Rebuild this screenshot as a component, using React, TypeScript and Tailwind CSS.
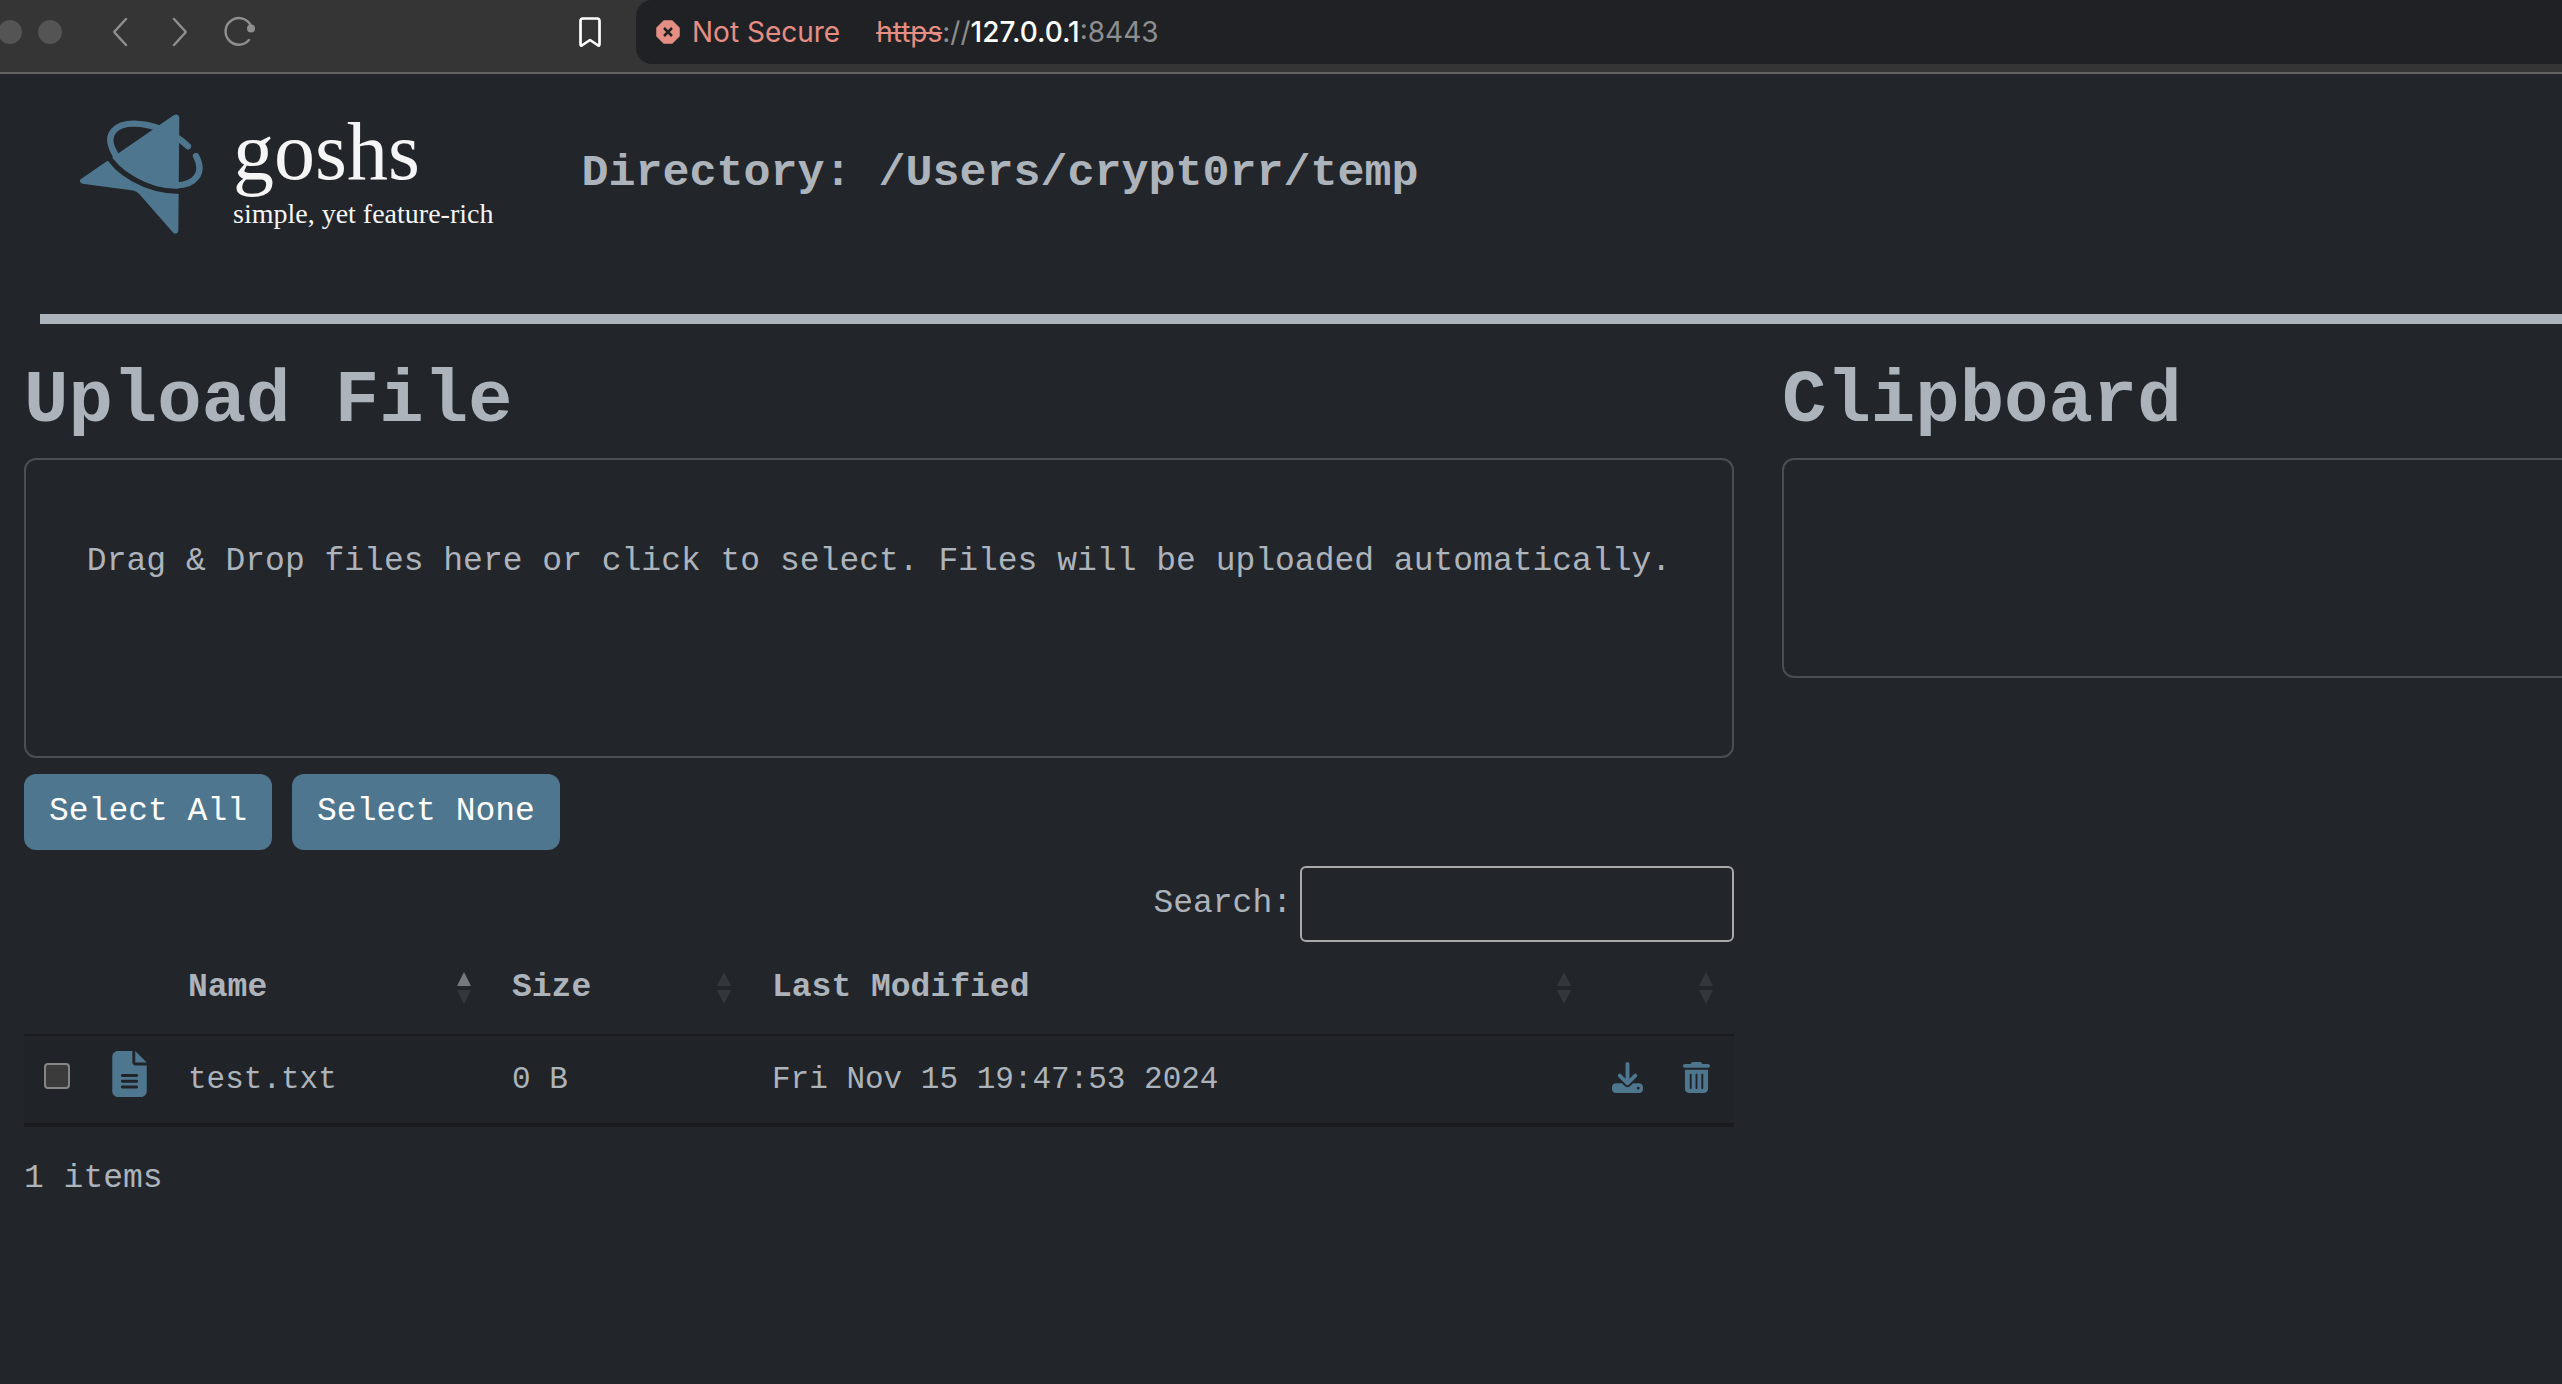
import { FaDownload, FaFileLines, FaTrashCan } from "react-icons/fa6";

interface SortProps {
    active?: boolean;
}

function SortArrows({ active }: SortProps) {
    return (
        <svg className="h-8 w-4 shrink-0" viewBox="0 0 16 32">
            <path d="M8 0 15 14H1Z" fill={active ? "#777b80" : "#34373c"} />
            <path d="M8 32 15 18H1Z" fill="#34373c" />
        </svg>
    )
}

function BrowserBar() {
    return (
        <div className="flex h-[74px] items-start overflow-hidden border-b-2 border-[#646464] bg-[#353535] font-[Inter,sans-serif] text-[28px]">
            <svg className="h-16 w-[636px] shrink-0" viewBox="0 0 636 64" fill="none" strokeLinecap="round" strokeLinejoin="round">
                <circle cx="10" cy="32" r="12" fill="#545454" />
                <circle cx="50" cy="32" r="12" fill="#545454" />
                <path d="M126 19 115 31Q114 32 115 33L126 45" stroke="#8e8e8e" strokeWidth="2.5" />
                <path d="M174 19 185 31Q186 32 185 33L174 45" stroke="#8e8e8e" strokeWidth="2.5" />
                <path d="M251 26A13.300 13.300 0 1 0 249 40" stroke="#8e8e8e" strokeWidth="2.5" />
                <circle cx="251" cy="28.500" r="4" fill="#8e8e8e" />
                <path d="M583 18.500H597Q599.500 18.500 599.500 21V44Q599.500 46.500 597.500 45L590 40 582.500 45Q580.500 46.500 580.500 44V21Q580.500 18.500 583 18.500Z" stroke="#fff" strokeWidth="2.700" />
            </svg>
            <div className="flex h-16 grow items-center rounded-l-2xl bg-[#202124] pl-5">
                <svg className="size-6" viewBox="0 0 24 24">
                    <path d="M8 1H16L23 8V16L16 23H8L1 16V8Z" fill="#e58e84" stroke="#e58e84" strokeWidth="1.500" strokeLinejoin="round" />
                    <path d="M8 8 16 16M16 8 8 16" stroke="#202124" strokeWidth="2.500" />
                </svg>
                <span className="ml-3 text-[#e58e84]">Not Secure</span>
                <a href="https://127.0.0.1:8443" className="ml-9 text-[#8d8e90]">
                    <span className="text-[#e58e84] line-through">https</span>://<span className="font-medium text-white">127.0.0.1</span>:8443
                </a>
            </div>
        </div>
    )
}

function Logo() {
    return (
        <a href="/" className="flex text-[#f5f5f5]">
            <svg className="h-[120px] w-[125px]" viewBox="59 70 375 360" fill="none" strokeLinecap="round" strokeLinejoin="round">
                <path d="M340 74Q355 66 357 82L354 420Q352 431 340 428L242 316Q231 301 213 299L66 279Q52 272 63 264Z" fill="#4e768e" />
                <path d="M136 184C165 243 255 303 362 302" stroke="#22252a" strokeWidth="16" />
                <path d="M383 167C340 125 275 99 220 99C165 99 138 130 155 172C178 232 270 286 348 284C402 284 435 248 407 196" stroke="#4e768e" strokeWidth="19" />
            </svg>
            <div className="ml-7 font-['Liberation_Serif',serif]">
                <div className="text-[82px] leading-[76px]">goshs</div>
                <div className="mt-2 text-[28px] leading-8">simple, yet feature-rich</div>
            </div>
        </a>
    )
}

function FileTable() {
    return (
        <table className="w-full table-fixed border-separate border-spacing-0 text-left">
            <thead>
                <tr className="h-[94px] *:border-b-2 *:border-[#191b1f] *:px-5">
                    <th className="w-[68px]"></th>
                    <th className="w-[76px]"></th>
                    <th className="w-[324px]">
                        <div className="flex items-center justify-between">Name <SortArrows active /></div>
                    </th>
                    <th className="w-[260px]">
                        <div className="flex items-center justify-between">Size <SortArrows /></div>
                    </th>
                    <th>
                        <div className="flex items-center justify-between">Last Modified <SortArrows /></div>
                    </th>
                    <th className="w-[142px]">
                        <div className="flex justify-end"><SortArrows /></div>
                    </th>
                </tr>
            </thead>
            <tbody>
                <tr className="h-[91px] bg-[#202327] text-[31px] *:border-b-4 *:border-[#191b1f] *:px-5">
                    <td className="pb-2">
                        <input
                            type="checkbox"
                            aria-label="Select test.txt"
                            className="block size-[26px] appearance-none rounded border-2 border-[#858585] bg-[#3b3b3b]"
                        />
                    </td>
                    <td className="pb-3"><FaFileLines className="h-[46px] w-[35px] text-[#4e768e]" /></td>
                    <td><a href="/test.txt">test.txt</a></td>
                    <td>0 B</td>
                    <td>Fri Nov 15 19:47:53 2024</td>
                    <td className="pb-1">
                        <div className="flex items-center gap-10 text-[#4e768e]">
                            <a href="/test.txt?download" aria-label="Download"><FaDownload className="size-[31px]" /></a>
                            <button aria-label="Delete"><FaTrashCan className="h-[31px] w-[27px]" /></button>
                        </div>
                    </td>
                </tr>
            </tbody>
        </table>
    )
}

function App() {
    return (
        <div className="min-h-screen overflow-hidden bg-[#22252a] font-['Liberation_Mono',monospace] text-[33px] leading-[48px] text-[#adb3bb]">
            <BrowserBar />
            <header className="flex h-60 gap-[88px] pt-10 pl-20">
                <Logo />
                <h2 className="pt-8 text-[45px] leading-[56px] font-bold">Directory: /Users/crypt0rr/temp</h2>
            </header>
            <hr className="ml-10 border-t-10 border-[#adb3bb]" />
            <main className="grid grid-cols-[1758fr_804fr] pt-8">
                <section className="px-6">
                    <h1 className="mb-3 text-[74px] leading-[90px] font-bold">Upload File</h1>
                    <label className="block min-h-[300px] rounded-xl border-2 border-[#4b4e53] pt-[78px] text-center">
                        Drag &amp; Drop files here or click to select. Files will be uploaded automatically.
                        <input type="file" multiple className="hidden" />
                    </label>
                    <div className="mt-4 flex gap-5 text-white">
                        <button className="h-[76px] rounded-xl bg-[#4e768e] px-[25px]">Select All</button>
                        <button className="h-[76px] rounded-xl bg-[#4e768e] px-[25px]">Select None</button>
                    </div>
                    <div className="mt-4 flex items-center justify-end gap-2">
                        <label htmlFor="search">Search:</label>
                        <input id="search" type="search" className="h-[76px] w-[434px] rounded-md border-2 border-[#a9a9a9] px-3" />
                    </div>
                    <FileTable />
                    <p className="mt-7">1 items</p>
                </section>
                <section className="pl-6">
                    <h1 className="mb-3 text-[74px] leading-[90px] font-bold">Clipboard</h1>
                    <div className="h-[220px] rounded-l-xl border-2 border-r-0 border-[#4b4e53]"></div>
                </section>
            </main>
        </div>
    )
}

export default App
